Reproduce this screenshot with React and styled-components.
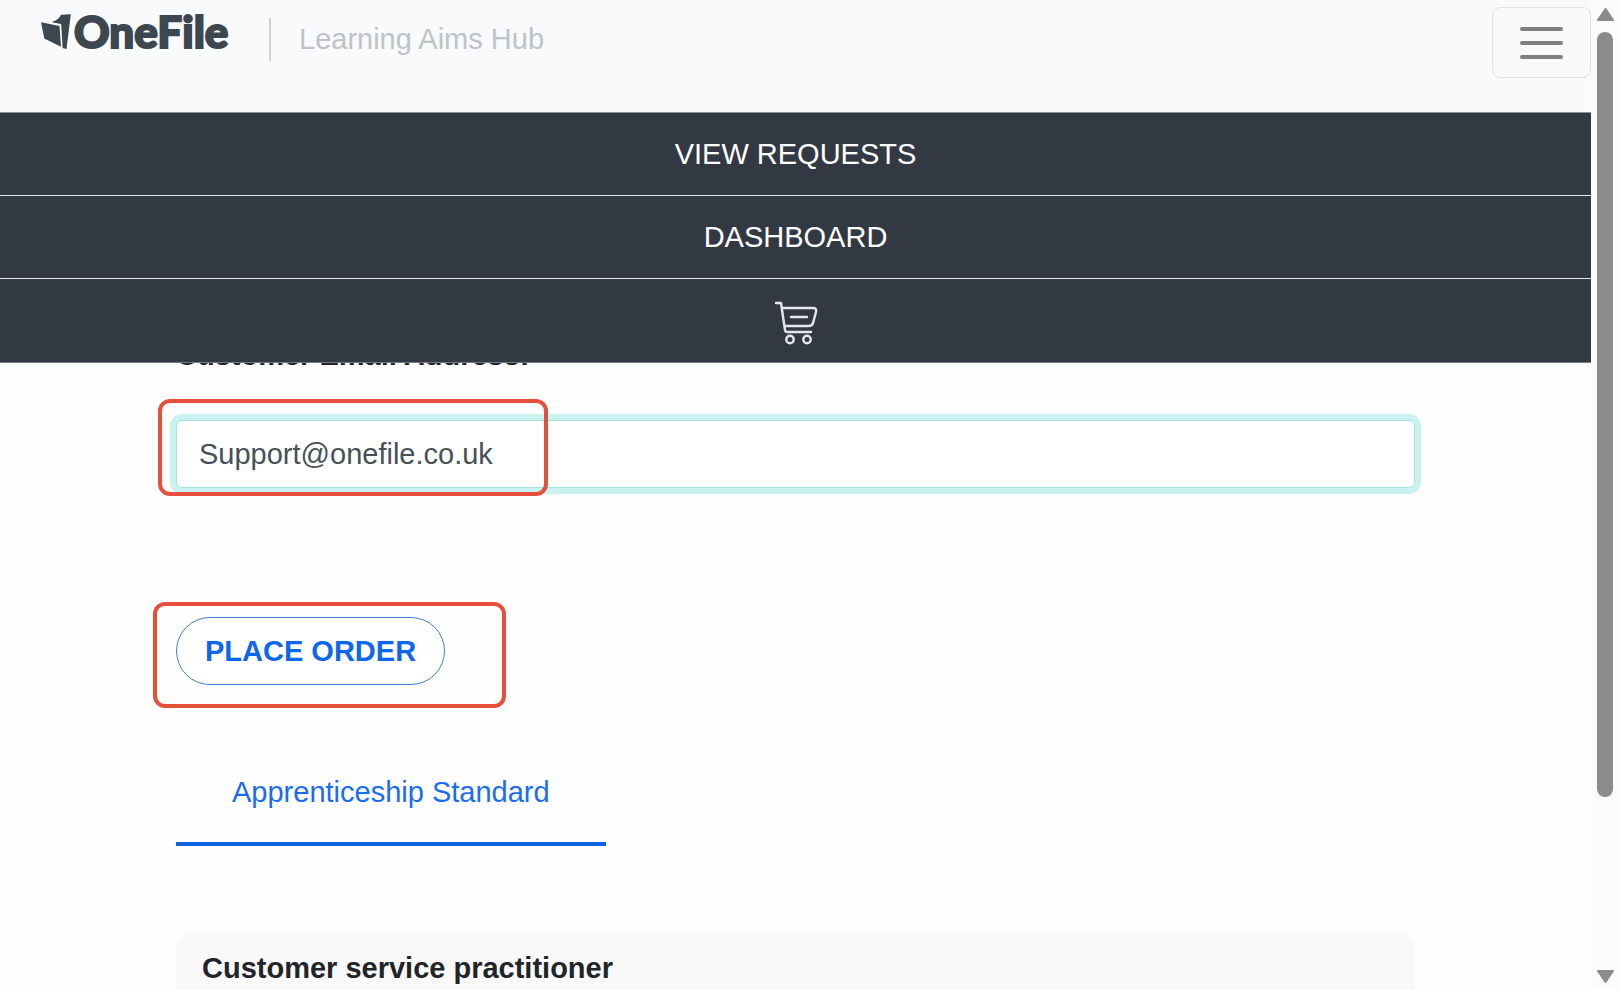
import React, { useState } from 'react';
import styled, { createGlobalStyle } from 'styled-components';

const GlobalStyle = createGlobalStyle`
  *, *::before, *::after {
    box-sizing: border-box;
  }
  body {
    margin: 0;
    overflow: hidden;
    background: #fefefe;
    color: #212529;
    font-family: 'Liberation Sans', Arial, sans-serif;
    font-size: 29px;
    line-height: 44px;
  }
`;

const Page = styled.div`
  display: flex;
  height: 100vh;
`;

const Viewport = styled.div`
  flex: 1;
  min-width: 0;
  height: 100%;
  overflow: hidden;
`;

const Header = styled.header`
  position: relative;
  z-index: 1;
`;

const TopBar = styled.div`
  display: flex;
  align-items: flex-start;
  height: 113px;
  padding: 7px 0 0 40px;
  background: #f8fafb;
  border-bottom: 1px solid #8b9196;
`;

const LogoLink = styled.a`
  display: flex;
  gap: 3px;
  width: 190px;
  color: #3c474f;
  text-decoration: none;
`;

const Wordmark = styled.span`
  font-family: Lato, sans-serif;
  font-size: 44px;
  font-weight: 900;
  line-height: 48px;
  -webkit-text-stroke: 2px #3c474f;
`;

const Product = styled.span`
  margin: 11px 0 0 39px;
  padding-left: 28px;
  border-left: 2px solid #d0d2d4;
  color: #bfc3c6;
  line-height: 43px;
`;

const Toggler = styled.button`
  display: flex;
  flex-direction: column;
  align-items: center;
  justify-content: center;
  gap: 10px;
  width: 99px;
  height: 71px;
  margin-left: auto;
  padding: 0;
  background: transparent;
  border: 1px solid #e2e3e4;
  border-radius: 8px;
`;

const TogglerLine = styled.span`
  width: 43px;
  height: 4px;
  border-radius: 2px;
  background: #808080;
`;

const NavLink = styled.a`
  display: flex;
  align-items: center;
  justify-content: center;
  height: 83px;
  background: #333943;
  border-bottom: 1px solid #e4e6e8;
  color: #fff;
  text-decoration: none;
`;

const CartLink = styled(NavLink)`
  height: 84px;
  padding-top: 4px;
  border-bottom-color: #777a80;
`;

const Main = styled.main`
  margin-top: -30px;
  padding: 0 176px;
`;

const Label = styled.label`
  display: block;
  font-weight: 700;
`;

const Field = styled.div`
  position: relative;
  margin-top: 43px;
`;

const EmailInput = styled.input`
  display: block;
  width: 100%;
  height: 68px;
  padding: 0 22px;
  background: #fff;
  border: 1px solid #a5e2df;
  border-radius: 6px;
  box-shadow: 0 0 0 6px #c9f2f0;
  outline: none;
  color: #495057;
  font: inherit;
`;

const OrderRow = styled.div`
  position: relative;
  margin-top: 129px;
`;

const OrderButton = styled.button`
  display: block;
  height: 68px;
  padding: 0 28px;
  background: #fff;
  border: 1px solid #3f7fd8;
  border-radius: 34px;
  color: #0d66ee;
  font: inherit;
  font-weight: 700;
`;

const Highlight = styled.span`
  position: absolute;
  top: ${({ $top }) => $top}px;
  left: ${({ $left }) => $left}px;
  width: ${({ $width }) => $width}px;
  height: ${({ $height }) => $height}px;
  border: 4px solid #e64f3c;
  border-radius: 12px;
  pointer-events: none;
`;

const Tabs = styled.nav`
  display: flex;
  margin-top: 85px;
`;

const Tab = styled.a`
  padding: 0 56px 28px;
  border-bottom: 4px solid #0d62dd;
  color: #1a6cf0;
  text-decoration: none;
`;

const Card = styled.section`
  min-height: 160px;
  margin-top: 87px;
  padding: 13px 26px;
  background: #f9f9f9;
  border-radius: 16px;
`;

const CardTitle = styled.h2`
  margin: 0;
  font-size: 29px;
`;

const ScrollTrack = styled.div`
  display: flex;
  flex-direction: column;
  align-items: center;
  width: 28px;
  height: 100%;
  padding: 8px 0 7px;
  background: #fcfcfc;
`;

const ScrollLane = styled.div`
  flex: 1;
  padding: 11px 0 16px;
`;

const ScrollThumb = styled.div`
  width: 16px;
  height: 83%;
  border-radius: 8px;
  background: #8b8b8b;
`;

const LogoMark = () => (
  <svg width="31" height="48" viewBox="40 7 31 48" fill="#3c474f" aria-hidden="true">
    <path d="M41 22.300 59.500 26 61 46.800 44.300 38.500Z" />
    <path d="M52.500 21.500C57 20.500 59.500 18 61 14.800L70.800 14.200 66.500 49 62.600 48 61.200 24 53 22.600Z" />
  </svg>
);

const CartIcon = () => (
  <svg
    width="44"
    height="44"
    viewBox="0 0 44 44"
    fill="none"
    stroke="#e6e7ea"
    strokeWidth="2.4"
    strokeLinecap="round"
    strokeLinejoin="round"
  >
    <path d="M2 2H7L11 29Q11.500 31 13 31H37" />
    <path d="M8 7H39Q43 7 42 11L39 22Q38 25 35 25H11" />
    <path d="M17 16H33" />
    <circle cx="16" cy="38.500" r="3.700" />
    <circle cx="33" cy="38.500" r="3.700" />
  </svg>
);

const Arrow = ({ down }) => (
  <svg width="17" height="13" viewBox="0 0 17 13" fill="#8b8b8b" stroke="#8b8b8b" strokeWidth="2" strokeLinejoin="round">
    <path d={down ? 'M1 1H16L8.500 12Z' : 'M1 12H16L8.500 1Z'} />
  </svg>
);

const App = () => {
  const [email, setEmail] = useState('Support@onefile.co.uk');

  return (
    <>
      <GlobalStyle />
      <Page>
        <Viewport>
          <Header>
            <TopBar>
              <LogoLink href="#home">
                <LogoMark />
                <Wordmark>OneFile</Wordmark>
              </LogoLink>
              <Product>Learning Aims Hub</Product>
              <Toggler type="button" aria-label="Toggle navigation">
                <TogglerLine />
                <TogglerLine />
                <TogglerLine />
              </Toggler>
            </TopBar>
            <nav>
              <NavLink href="#requests">VIEW REQUESTS</NavLink>
              <NavLink href="#dashboard">DASHBOARD</NavLink>
              <CartLink href="#cart" aria-label="Cart">
                <CartIcon />
              </CartLink>
            </nav>
          </Header>
          <Main>
            <Label htmlFor="email">Customer Email Address:</Label>
            <Field>
              <EmailInput id="email" type="email" value={email} onChange={(e) => setEmail(e.target.value)} />
              <Highlight $top={-21} $left={-18} $width={390} $height={97} />
            </Field>
            <OrderRow>
              <OrderButton type="button">PLACE ORDER</OrderButton>
              <Highlight $top={-15} $left={-23} $width={353} $height={106} />
            </OrderRow>
            <Tabs>
              <Tab href="#standard">Apprenticeship Standard</Tab>
            </Tabs>
            <Card>
              <CardTitle>Customer service practitioner</CardTitle>
            </Card>
          </Main>
        </Viewport>
        <ScrollTrack aria-hidden="true">
          <Arrow />
          <ScrollLane>
            <ScrollThumb />
          </ScrollLane>
          <Arrow down />
        </ScrollTrack>
      </Page>
    </>
  );
};

export default App;
